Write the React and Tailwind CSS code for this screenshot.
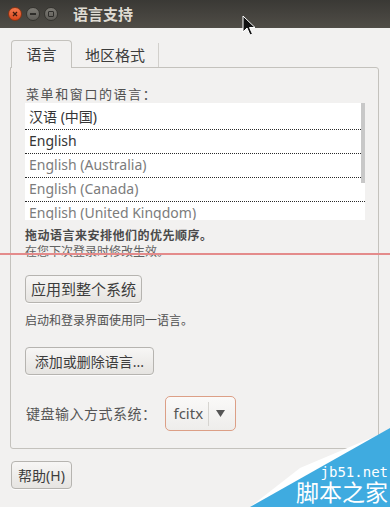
import React from "react";

const CJK = "font-['Noto_Sans','Noto_Sans_CJK_SC',sans-serif]";

const languages = [
  { name: "汉语 (中国)", active: true },
  { name: "English", active: true },
  { name: "English (Australia)", active: false },
  { name: "English (Canada)", active: false },
  { name: "English (United Kingdom)", active: false },
];

const GtkButton = ({ children, className = "" }) => (
  <button
    className={`h-[28px] rounded-[4px] border border-[#b6b4b0] bg-gradient-to-b from-[#f7f6f5] to-[#e6e4e1] text-[#3c3c3c] shadow-[0_1px_0_rgba(255,255,255,0.8)] ${className}`}
  >
    {children}
  </button>
);

const App = () => {
  return (
    <div
      className={`relative w-[390px] h-[507px] overflow-hidden bg-[#f2f1f0] ${CJK}`}
    >
      {/* Title bar */}
      <div className="h-[28px] flex items-center bg-gradient-to-b from-[#3a3935] to-[#504d47] pl-[8px]">
        <div className="flex items-center gap-[4px]">
          <div className="w-[14px] h-[14px] rounded-full bg-gradient-to-b from-[#f47a4e] to-[#d9461a] border border-[#8a3414] flex items-center justify-center">
            <svg width="6" height="6" viewBox="0 0 6 6">
              <path d="M1 1L5 5M5 1L1 5" stroke="#3b1a0e" strokeWidth="1.3" />
            </svg>
          </div>
          <div className="w-[14px] h-[14px] rounded-full bg-gradient-to-b from-[#7d7b75] to-[#5e5c57] border border-[#35342f] flex items-center justify-center">
            <div className="w-[6px] h-[1.5px] bg-[#2e2d2a]" />
          </div>
          <div className="w-[14px] h-[14px] rounded-full bg-gradient-to-b from-[#7d7b75] to-[#5e5c57] border border-[#35342f] flex items-center justify-center">
            <div className="w-[6px] h-[6px] border border-[#2e2d2a] rounded-[1px]" />
          </div>
        </div>
        <span className="ml-[15px] text-[15px] font-bold text-[#dfdbd2] leading-none">
          语言支持
        </span>
      </div>

      <div className="pl-[10px] pr-[11px] pt-[11px]">
        {/* Tabs */}
        <div className="flex items-end h-[28px]">
          <div className="w-[61px] h-[28px] ml-[1px] border border-b-0 border-[#c4c2bd] rounded-t-[4px] bg-[#f2f1f0] flex items-center justify-center text-[15px] text-[#3c3c3c] relative top-[1px] z-10">
            语言
          </div>
          <div className="w-[87px] h-[24px] border-r border-[#d2d0cc] flex items-center justify-center text-[15px] text-[#3c3c3c]">
            地区格式
          </div>
        </div>

        {/* Notebook frame */}
        <div className="h-[382px] border border-[#c4c2bd] rounded-b-[3px] rounded-tr-[3px] pl-[14px] pr-[13px] pt-[17px]">
          <div className="ml-[1px] text-[13px] leading-[18px] text-[#505050] tracking-[1.6px]">
            菜单和窗口的语言：
          </div>
          <div className="relative h-[117px] bg-white pt-[3px] overflow-hidden">
            {languages.map((lang) => (
              <div
                key={lang.name}
                className={`h-[24px] pl-[4px] pr-[4px] border-b border-dotted border-[#2a2a2a] text-[14px] leading-[22px] ${
                  lang.active ? "text-[#353535]" : "text-[#7c7c7c]"
                }`}
              >
                {lang.name}
              </div>
            ))}
            <div className="absolute right-0 top-0 w-[4px] h-[80px] bg-[#c8c8c8]" />
          </div>

          <div className="mt-[8px] text-[12px] leading-[16px] font-bold text-[#4a4a4a] tracking-[0.5px]">
            拖动语言来安排他们的优先顺序。
          </div>
          <div className="text-[12px] leading-[16px] text-[#626262]">
            在您下次登录时修改生效。
          </div>

          <GtkButton className="mt-[15px] w-[117px] text-[15px]">
            应用到整个系统
          </GtkButton>

          <div className="mt-[10px] text-[12px] leading-[16px] text-[#505050]">
            启动和登录界面使用同一语言。
          </div>

          <GtkButton className="mt-[18px] w-[129px] text-[14px]">
            添加或删除语言...
          </GtkButton>

          <div className="mt-[21px] flex items-center">
            <span className="ml-[1px] text-[14px] text-[#555555] tracking-[0.5px]">
              键盘输入方式系统：
            </span>
            <div className="ml-[8px] h-[35px] w-[71px] rounded-[5px] border border-[#dc9f86] bg-gradient-to-b from-[#faf9f8] to-[#eeedeb] flex items-center">
              <span className="pl-[8px] w-[42px] text-[15px] text-[#555555]">
                fcitx
              </span>
              <div className="w-[1px] h-[24px] bg-[#d6d4d0]" />
              <svg
                className="ml-[7px]"
                width="9"
                height="7"
                viewBox="0 0 9 7"
              >
                <path d="M0 0H9L4.5 7Z" fill="#555555" />
              </svg>
            </div>
          </div>
        </div>

        <GtkButton className="mt-[12px] ml-[1px] w-[61px] text-[14px]">
          帮助(H)
        </GtkButton>
      </div>

      {/* red annotation line */}
      <div className="absolute left-0 top-[253px] w-full h-[2px] bg-[#e48b8b]" />

      {/* mouse pointer */}
      <svg
        className="absolute left-[242px] top-[15px]"
        width="14"
        height="21"
        viewBox="0 0 14 21"
      >
        <path
          d="M1 1V17L5 13L8 20L10.5 19L7.5 12.5H13Z"
          fill="#111"
          stroke="#fff"
          strokeWidth="1"
        />
      </svg>

      {/* watermark */}
      <svg
        className="absolute left-[240px] top-[420px]"
        width="150"
        height="87"
        viewBox="240 420 150 87"
      >
        <polygon points="250,507 300,468 390,430" fill="#ffffff" />
        <polygon points="250,507 390,428 390,507" fill="#3fabe0" />
      </svg>
      <div className="absolute right-[2px] top-[464px] text-[14px] leading-[16px] text-white font-['DejaVu_Sans_Mono',monospace]">
        jb51.net
      </div>
      <div className="absolute right-[2px] top-[480px] text-[23px] leading-[24px] text-white">
        脚本之家
      </div>
    </div>
  );
};

export default App;
